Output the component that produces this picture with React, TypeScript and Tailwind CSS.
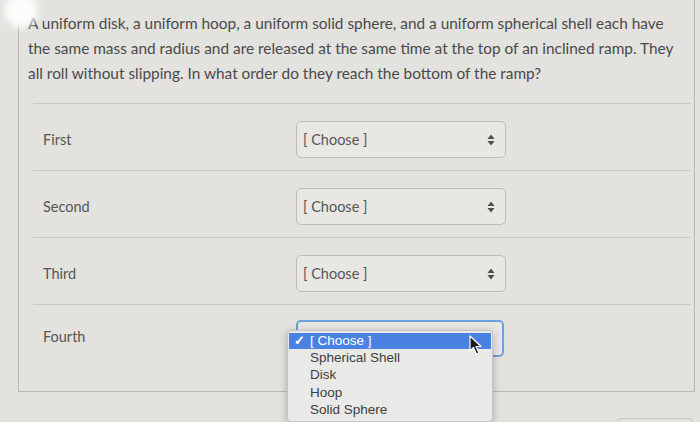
import React from "react";

const rows = ["First", "Second", "Third", "Fourth"];
const options = ["Spherical Shell", "Disk", "Hoop", "Solid Sphere"];

const Arrows: React.FC = () => (
  <svg width="8" height="12" viewBox="0 0 8 12" className="text-[#4d4d4d]">
    <path d="M4 0.5 L7.5 5 H0.5 Z" fill="currentColor" />
    <path d="M4 11.5 L7.5 7 H0.5 Z" fill="currentColor" />
  </svg>
);

const Cursor: React.FC = () => (
  <svg width="14" height="20" viewBox="0 0 14 20" className="absolute left-[180px] top-[2px]">
    <path d="M1 1 L1 16 L4.5 12.5 L7.5 19 L10 18 L7 11.5 L12 11.5 Z" fill="#1a1a1a" stroke="#ffffff" strokeWidth="1.2" strokeLinejoin="round" />
  </svg>
);

const Select: React.FC<{ open?: boolean }> = ({ open }) => (
  <div
    className={
      open
        ? "relative flex h-[37px] w-[208px] items-center justify-between rounded-[5px] border-2 border-[#6f9fde] bg-[#e8e7e3] pl-[5px] pr-[9px]"
        : "relative flex h-[37px] w-[210px] items-center justify-between rounded-[5px] border border-[#bdbcb8] bg-[#e8e7e3] pl-[6px] pr-[10px]"
    }
  >
    <span className={open ? "invisible text-[14.5px] text-[#555555]" : "text-[14.5px] text-[#555555]"}>[ Choose ]</span>
    <Arrows />
    {open && (
      <div className="absolute left-[-11px] top-[8px] w-[206px] rounded-[4px] border border-[#c4c4c2] bg-[#e9e9e7] py-[2px] shadow-[0_2px_8px_rgba(0,0,0,0.25)] font-['Liberation_Sans',Arial,sans-serif] text-[13.5px] text-[#3d3d3d]">
        <div className="relative mx-[1px] flex h-[16px] items-center bg-[#4a82e3] text-white">
          <span className="w-[21px] pl-[5px] text-[13px] font-bold">✓</span>
          <span>[ Choose ]</span>
          <Cursor />
        </div>
        {options.map((o) => (
          <div key={o} className="flex h-[17.5px] items-center pl-[22px]">
            {o}
          </div>
        ))}
      </div>
    )}
  </div>
);

export default function App() {
  return (
    <div className="relative h-[422px] w-[700px] overflow-hidden bg-[#e3e2de] font-['Lato','Open_Sans',sans-serif]">
      <div className="ml-[18px] mr-[5px] h-[392px] border-x border-b border-[#b9b8b4]">
        <p className="pl-[9px] pr-[10px] pt-[11px] text-[15.4px] leading-[25px] text-[#4a4a4a]">
          A uniform disk, a uniform hoop, a uniform solid sphere, and a uniform spherical shell each have the same mass and radius and are released at the same time at the top of an inclined ramp. They all roll without slipping. In what order do they reach the bottom of the ramp?
        </p>
        <div className="mt-[17px]">
          {rows.map((r, i) => (
            <div
              key={r}
              className={
                i < 3
                  ? "ml-[14px] mr-[4px] flex h-[67px] border-t border-[#c9c8c4]"
                  : "ml-[14px] mr-[4px] flex h-[87px] border-t border-[#c9c8c4]"
              }
            >
              <div className={i < 3 ? "w-[263px] pl-[10px] pt-[25px] text-[14.5px] text-[#555555]" : "w-[263px] pl-[10px] pt-[21px] text-[14.5px] text-[#555555]"}>{r}</div>
              <div className={i < 3 ? "pt-[17px]" : "pt-[15px]"}>
                <Select open={i === 3} />
              </div>
            </div>
          ))}
        </div>
      </div>
      <div className="ml-[617px] mt-[26px] h-[10px] w-[76px] rounded-t-[4px] border border-[#c4c3bf]" />
      <div className="absolute left-[4px] top-[-6px] h-[34px] w-[34px] rounded-full bg-white opacity-90 blur-[3px]" />
    </div>
  );
}
